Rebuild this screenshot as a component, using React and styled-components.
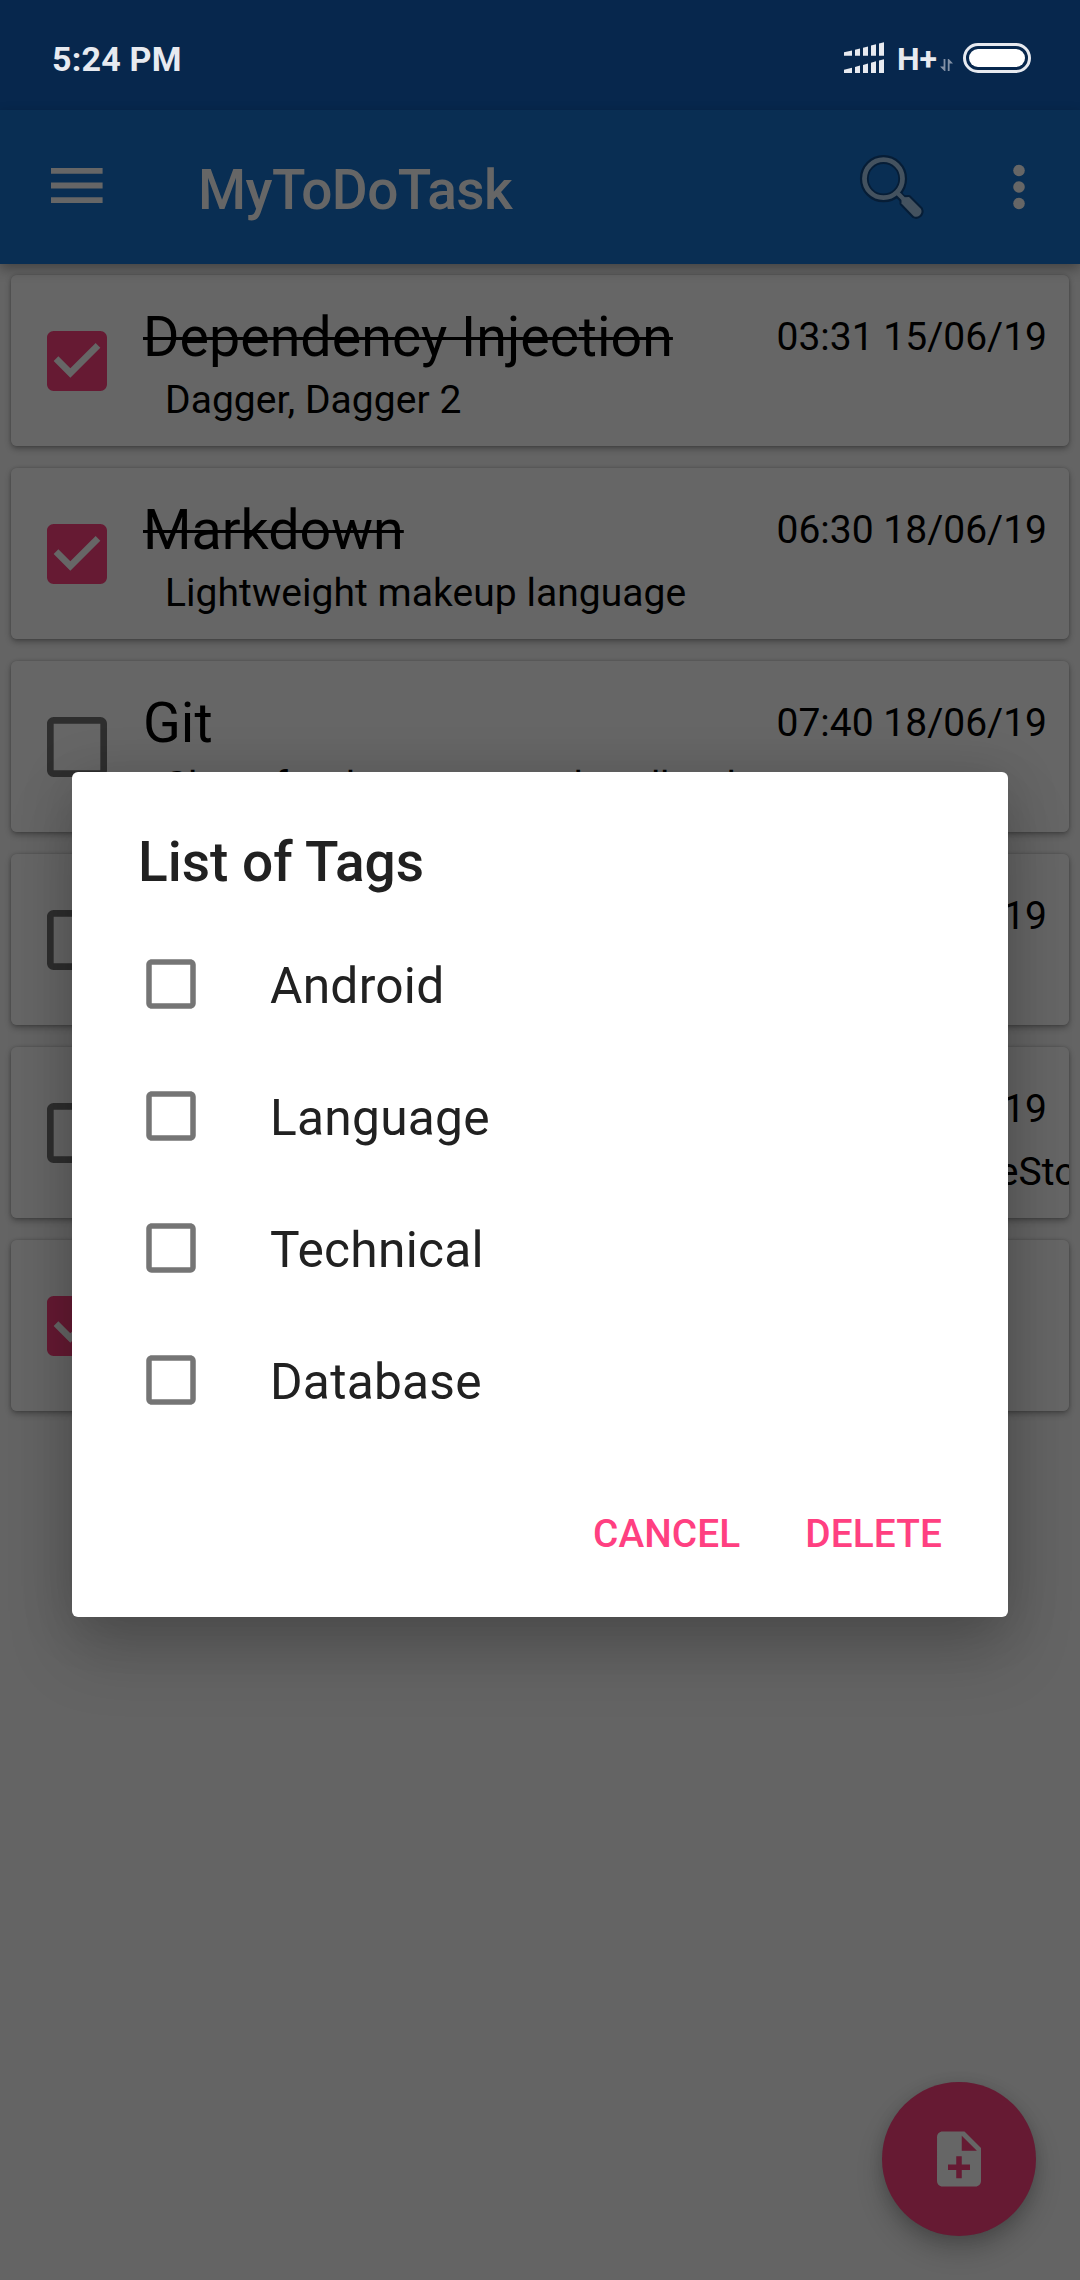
import React from "react";
import styled, { createGlobalStyle, css } from "styled-components";

const GlobalStyle = createGlobalStyle`
  * { box-sizing: border-box; }
  body {
    margin: 0;
    background: #646464;
    font-family: Roboto, "Noto Sans", sans-serif;
  }
`;

const Screen = styled.div`
  position: relative;
  width: 1080px;
  height: 2280px;
  overflow: hidden;
  background: #646464;
`;

const StatusBar = styled.header`
  height: 110px;
  padding: 6px 49px 0 52px;
  display: flex;
  align-items: center;
  justify-content: space-between;
  background: #07274d;
  color: #e7eaf0;
`;

const Clock = styled.span`
  padding-top: 2px;
  font-size: 34px;
  font-weight: 700;
  line-height: 40px;
  letter-spacing: 0.2px;
`;

const StatusIcons = styled.div`
  display: flex;
  align-items: center;
  height: 32px;
`;

const StatusGlyph = styled.svg`
  flex: none;
  margin-left: ${(p) => p.$gap || 0}px;
`;

const NetworkType = styled.span`
  width: 42px;
  margin-left: 13px;
  padding-top: 2px;
  font-size: 32px;
  font-weight: 700;
  line-height: 38px;
  white-space: nowrap;
`;

const AppBar = styled.nav`
  position: relative;
  z-index: 1;
  height: 154px;
  display: flex;
  align-items: center;
  padding: 0 55px 0 51px;
  background: #092e53;
  color: #666;
  box-shadow: 0 5px 12px rgba(0, 0, 0, 0.32);
`;

const MenuIcon = styled.svg`
  flex: none;
  margin-top: -3px;
`;

const AppTitle = styled.h1`
  flex: 1;
  margin: 5px 0 0 95px;
  font-size: 55px;
  font-weight: 500;
  line-height: 64px;
  letter-spacing: -0.55px;
`;

const SearchIcon = styled.svg`
  flex: none;
  margin: 2px 88px 0 0;
`;

const DotsIcon = styled.svg`
  flex: none;
`;

const TaskList = styled.main`
  display: flex;
  flex-direction: column;
  gap: 22px;
  padding: 11px;
`;

const CardShadow = styled.div`
  border-radius: 6px;
  box-shadow: 0 3px 6px rgba(0, 0, 0, 0.3), 0 0 3px rgba(0, 0, 0, 0.2);
`;

const Card = styled.article`
  height: 171px;
  display: flex;
  overflow: hidden;
  padding-left: 26px;
  border-radius: 6px;
  background: #666;
  color: #000;
`;

const CheckSvg = styled.svg`
  flex: none;
  fill: ${(p) => p.$color};
`;

const CardCheck = styled.div`
  padding-top: 46px;
  width: 80px;
`;

const CardBody = styled.div`
  flex: 1;
  min-width: 0;
  padding: 29px 22px 0 26px;
`;

const CardTop = styled.div`
  display: flex;
  justify-content: space-between;
  align-items: flex-start;
  height: 66px;
`;

const TaskTitle = styled.h2`
  margin: 0;
  font-size: 55.6px;
  font-weight: 400;
  line-height: 66px;
  white-space: nowrap;
  ${(p) =>
    p.$done &&
    css`
      text-decoration: line-through;
      text-decoration-thickness: 3px;
    `}
`;

const TaskDate = styled.time`
  padding-top: 11px;
  font-size: 39px;
  line-height: 45px;
  white-space: nowrap;
`;

const TaskNote = styled.p`
  margin: 8px 0 0 22px;
  font-size: 39px;
  line-height: 45px;
  letter-spacing: 0.05px;
  white-space: nowrap;
`;

const Dialog = styled.section`
  position: absolute;
  z-index: 3;
  left: 72px;
  top: 772px;
  width: 936px;
  height: 845px;
  display: flex;
  flex-direction: column;
  padding-top: 58px;
  border-radius: 6px;
  background: #fff;
  color: #212121;
  box-shadow: 0 36px 66px rgba(0, 0, 0, 0.17), 0 6px 54px rgba(0, 0, 0, 0.16);
`;

const DialogTitle = styled.h2`
  margin: 0 0 22px 66px;
  font-size: 55px;
  font-weight: 500;
  line-height: 64px;
`;

const TagRow = styled.label`
  height: 132px;
  display: flex;
  align-items: center;
  gap: 66px;
  padding: 4px 0 0 66px;
`;

const TagName = styled.span`
  padding-top: 3px;
  font-size: 49.7px;
  line-height: 58px;
  letter-spacing: 0.25px;
`;

const Actions = styled.footer`
  display: flex;
  justify-content: flex-end;
  gap: 65px;
  padding: 67px 66px 0 0;
`;

const ActionButton = styled.button`
  padding: 0;
  border: 0;
  background: none;
  color: #ff4081;
  font-family: inherit;
  font-size: 38.8px;
  font-weight: 500;
  line-height: 45px;
  letter-spacing: 0.1px;
`;

const Fab = styled.button`
  position: absolute;
  left: 882px;
  top: 2082px;
  width: 154px;
  height: 154px;
  display: flex;
  align-items: center;
  justify-content: center;
  padding: 0;
  border: 0;
  border-radius: 50%;
  background: #661a33;
  box-shadow: 0 14px 26px rgba(0, 0, 0, 0.22), 0 2px 14px rgba(0, 0, 0, 0.12);
`;

const UNCHECKED =
  "M19 5v14H5V5h14m0-2H5c-1.1 0-2 .9-2 2v14c0 1.1.9 2 2 2h14c1.1 0 2-.9 2-2V5c0-1.1-.9-2-2-2z";
const CHECKED =
  "M19 3H5c-1.11 0-2 .9-2 2v14c0 1.1.89 2 2 2h14c1.11 0 2-.9 2-2V5c0-1.1-.89-2-2-2zm-9 14l-5-5 1.41-1.41L10 14.17l7.59-7.59L19 8l-9 9z";
const NOTE_ADD =
  "M14 2H6c-1.1 0-1.99.9-1.99 2L4 20c0 1.1.89 2 1.99 2H18c1.1 0 2-.9 2-2V8l-6-6zm2 14h-3v3h-2v-3H8v-2h3v-3h2v3h3v2zm-3-7V3.5L18.5 9H13z";
const HANDLE =
  "M61.5 63.5V59.5L65 57.2L69 57L81 69Q82.5 72.5 79.8 75.3Q77 77.8 73.8 76.3Z";

function Check({ size, checked, color }) {
  return (
    <CheckSvg $color={color} width={size} height={size} viewBox="0 0 24 24">
      <path d={checked ? CHECKED : UNCHECKED} />
    </CheckSvg>
  );
}

/* Two stacked rows of five bars, one per SIM. */
function Signal() {
  return (
    <StatusGlyph width="40" height="32" viewBox="0 0 40 32" fill="#e7eaf0">
      <path d="M0 10.3L8 8.4V13.7H0zM11 7.8L16 6.5V13.7H11zM19 5.8L24 4.4V13.7H19zM27 3.6L32 2.2V13.7H27zM35 1.4L40 .3V13.7H35z" />
      <path d="M0 27.8L8 25.7V31H0zM11 25L16 23.6V31H11zM19 23L24 21.6V31H19zM27 20.8L32 19.3V31H27zM35 18.5L40 17.2V31H35z" />
    </StatusGlyph>
  );
}

const TASKS = [
  { title: "Dependency Injection", note: "Dagger, Dagger 2", date: "03:31 15/06/19", done: true },
  { title: "Markdown", note: "Lightweight makeup language", date: "06:30 18/06/19", done: true },
  { title: "Git", note: "Share for the company, handbook", date: "07:40 18/06/19" },
  { title: "", note: "", date: "07:40 18/06/19" },
  { title: "", note: "SharedPreferences, Database, Internal, Disks, FileStorage", date: "07:40 18/06/19" },
  { title: "", note: "", date: "", done: true },
];

const TAGS = ["Android", "Language", "Technical", "Database"];

export default function App() {
  return (
    <Screen>
      <GlobalStyle />
      <StatusBar>
        <Clock>5:24 PM</Clock>
        <StatusIcons>
          <Signal />
          <NetworkType>H+</NetworkType>
          <StatusGlyph $gap={1} width="13" height="32" viewBox="0 0 13 32" fill="#8391a6">
            <path d="M3.6 17H5.4V29H4.4L0 24.5H3.6zM7.8 29V17H8.8L13 21.5H9.6V29z" />
          </StatusGlyph>
          <StatusGlyph $gap={10} width="68" height="32" viewBox="0 0 68 32">
            <rect x="1.5" y="2.5" width="65" height="27" rx="13.5" fill="none" stroke="#e7eaf0" strokeWidth="3" />
            <rect x="6" y="7" width="56" height="18" rx="9" fill="#fff" />
          </StatusGlyph>
        </StatusIcons>
      </StatusBar>
      <AppBar>
        <MenuIcon width="52" height="35" viewBox="0 0 52 35" fill="#666">
          <path d="M0 0H51.6V5.8H0zM0 14.6H51.6V20.4H0zM0 29.2H51.6V35H0z" />
        </MenuIcon>
        <AppTitle>MyToDoTask</AppTitle>
        <SearchIcon width="66" height="68" viewBox="19 14 66 68" strokeLinejoin="round">
          <g fill="none" stroke="#061d36">
            <circle cx="43.5" cy="38.7" r="19.2" strokeWidth="8.8" />
            <path d="M57 53L63 59" strokeWidth="8" />
            <path d={HANDLE} strokeWidth="4" />
          </g>
          <circle cx="43.5" cy="38.7" r="19" fill="none" stroke="#44525f" strokeWidth="4.8" />
          <path d="M56.5 52L65 60.5" stroke="#44525f" strokeWidth="4.4" />
          <path d={HANDLE} fill="#44525f" />
        </SearchIcon>
        <DotsIcon width="12" height="46" viewBox="0 0 12 46" fill="#666">
          <circle cx="6" cy="6.5" r="5.8" />
          <circle cx="6" cy="23" r="5.8" />
          <circle cx="6" cy="39.5" r="5.8" />
        </DotsIcon>
      </AppBar>
      <TaskList>
        {TASKS.map((t, i) => (
          <CardShadow key={i}>
            <Card>
              <CardCheck>
                <Check size={80} checked={t.done} color={t.done ? "#661a33" : "#2e2e2e"} />
              </CardCheck>
              <CardBody>
                <CardTop>
                  <TaskTitle $done={t.done}>{t.title}</TaskTitle>
                  <TaskDate>{t.date}</TaskDate>
                </CardTop>
                <TaskNote>{t.note}</TaskNote>
              </CardBody>
            </Card>
          </CardShadow>
        ))}
      </TaskList>
      <Fab aria-label="Add task">
        <svg width="66" height="66" viewBox="0 0 24 24" fill="#666">
          <path d={NOTE_ADD} />
        </svg>
      </Fab>
      <Dialog>
        <DialogTitle>List of Tags</DialogTitle>
        {TAGS.map((tag) => (
          <TagRow key={tag}>
            <Check size={66} color="#757575" />
            <TagName>{tag}</TagName>
          </TagRow>
        ))}
        <Actions>
          <ActionButton>CANCEL</ActionButton>
          <ActionButton>DELETE</ActionButton>
        </Actions>
      </Dialog>
    </Screen>
  );
}
